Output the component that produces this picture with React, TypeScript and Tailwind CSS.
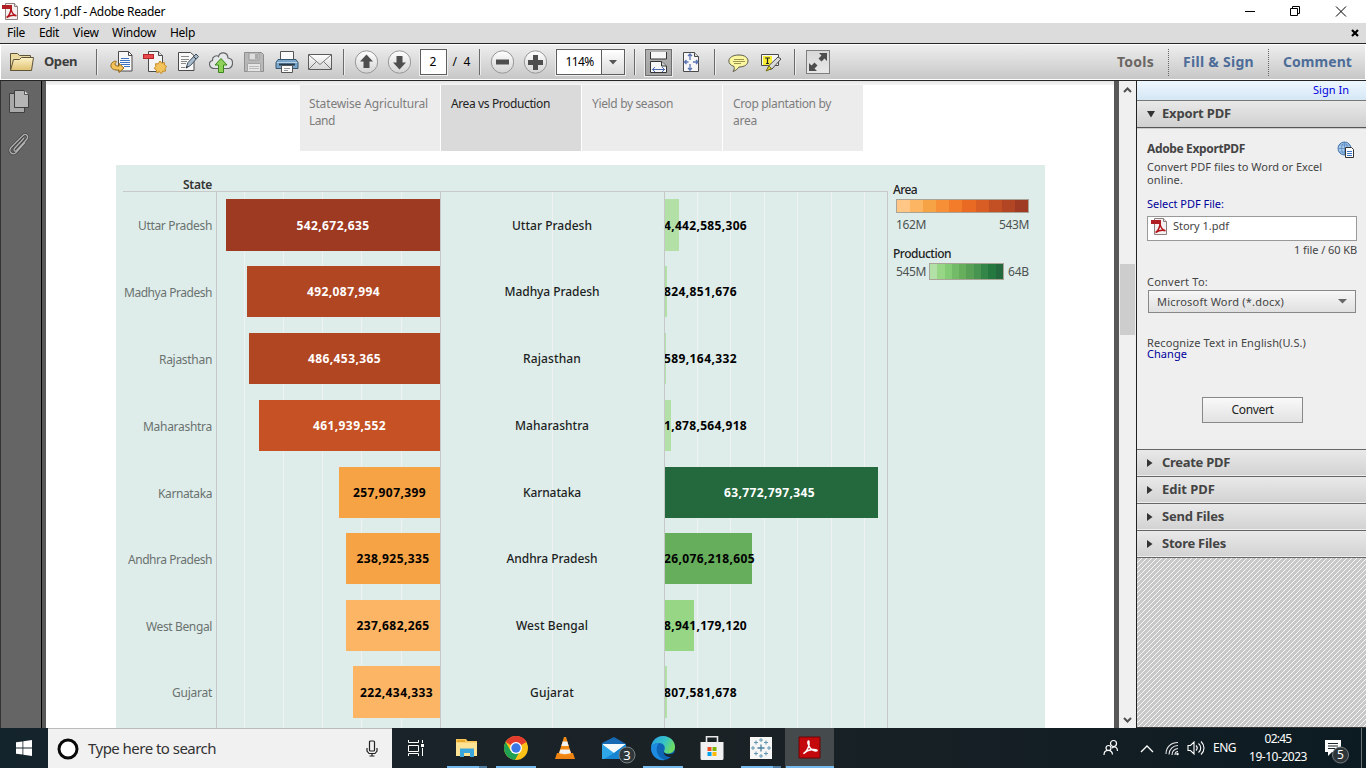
import React, { useLayoutEffect, useRef } from 'react';

/* Single line of text spread over an exact width through its letter spacing. */
function Fit({ w, children, className = '' }: { w: number; children: string; className?: string }) {
  const ref = useRef<HTMLSpanElement>(null);
  useLayoutEffect(() => {
    const el = ref.current;
    if (!el) return;
    el.style.letterSpacing = '0px';
    el.style.width = 'max-content';
    const natural = el.getBoundingClientRect().width;
    el.style.letterSpacing = `${(w - natural) / children.length}px`;
    el.style.width = `${w}px`;
  }, [w, children]);
  return (
    <span ref={ref} className={`inline-block shrink-0 whitespace-pre ${className}`}>
      {children}
    </span>
  );
}

const PdfIcon = () => (
  <svg width="17" height="17" viewBox="0 0 17 17" className="shrink-0">
    <path d="M3.500 .5h9l3 3v13h-12z" fill="#f4f1f0" stroke="#8d7f7d" />
    <path d="M12.500 .5v3h3" fill="#ddd" stroke="#8d7f7d" />
    <path d="M0 2h10v4H0z" fill="#b01f24" />
    <path d="M4.500 14.500c2-1 4.500-5 4.500-9 .5 4 2.500 6.500 5.500 7.200-3-.7-7 0-10 1.800z" fill="none" stroke="#b3151b" strokeWidth="1.500" />
  </svg>
);

const Sep = ({ className = '' }: { className?: string }) => (
  <div className={`h-[26px] w-px shrink-0 bg-[#6b6b6b] shadow-[1px_0_0_#ededed] ${className}`} />
);
const Slot = ({ children }: { children: React.ReactNode }) => (
  <div className="flex w-[33px] shrink-0 justify-center">
    <svg width="24" height="24" viewBox="0 0 24 24">{children}</svg>
  </div>
);

function TitleBar() {
  return (
    <div className="flex h-[23px] items-center bg-white pl-[2px]">
      <PdfIcon />
      <Fit w={142} className="ml-[4px] text-xs text-black">Story 1.pdf - Adobe Reader</Fit>
      <svg width="110" height="14" viewBox="0 0 110 14" className="mr-[14px] mb-[2px] ml-auto" fill="none" stroke="#000">
        <path d="M3 7.500h10M48.500 4.500h7v7h-7zM50.500 4.500v-2h7v7h-2" />
        <path d="M94 2.500l10 10M104 2.500l-10 10" />
      </svg>
    </div>
  );
}

function MenuBar() {
  return (
    <div className="flex h-5 items-center bg-[#dcdcdc] pl-[7px] text-xs text-black">
      <Fit w={18}>File</Fit>
      <Fit w={20} className="ml-[14px]">Edit</Fit>
      <Fit w={26} className="ml-[14px]">View</Fit>
      <Fit w={44} className="ml-[13px]">Window</Fit>
      <Fit w={25} className="ml-[14px]">Help</Fit>
      <svg width="8" height="8" viewBox="0 0 8 8" className="mr-[7px] ml-auto">
        <path d="M1 1l6 6M7 1L1 7" stroke="#000" strokeWidth="2.200" />
      </svg>
    </div>
  );
}

function Toolbar() {
  return (
    <div className="flex h-[38px] items-center border-y border-[#262626] bg-linear-to-b from-[#efefef] to-[#c6c6c6] shadow-[inset_1px_1px_0_#fff,inset_-1px_-1px_0_#fff]">
      <svg width="26" height="24" viewBox="0 0 26 24" className="ml-[9px] shrink-0">
        <defs>
          <linearGradient id="fold" x2="0" y2="1"><stop stopColor="#fdf3c9" /><stop offset="1" stopColor="#dfc170" /></linearGradient>
          <linearGradient id="ball" x2="0" y2="1"><stop stopColor="#fff" /><stop offset="1" stopColor="#d4d4d4" /></linearGradient>
        </defs>
        <path d="M1.500 20.500v-17h7l2 2h11v4" fill="#ead9a0" stroke="#5f543a" />
        <path d="M1.500 20.500l3-11h6l2-2h12l-2 13z" fill="url(#fold)" stroke="#5f543a" />
      </svg>
      <Fit w={33} className="ml-[9px] text-[13px] font-bold text-[#3d3d3d]">Open</Fit>
      <Sep className="mr-[8.500px] ml-[19px]" />
      <Slot>
        <path d="M8.500 1.500h10l3.500 3.500v16h-13.500z" fill="#f8f8f8" stroke="#4a4a4a" />
        <path d="M18.500 1.500v4H22" fill="none" stroke="#4a4a4a" />
        <path d="M11 8.500h8M10 10.500h10M10 12.500h10M11 14.500h9M14 16.500h6" stroke="#3b74c4" />
        <path d="M5.500 11c-3 .5-5 3-4.500 5.500.5 2.500 3.500 4 8 3.500v2.500l5-4.500-5-4.500v2.500c-2.500.3-4-.3-4-2 0-1 .8-1.600 1.500-2z" fill="#f4c45a" stroke="#8f6417" />
      </Slot>
      <Slot>
        <path d="M5.500 1.500h10l4 4v16h-14z" fill="#f4f4f4" stroke="#4a4a4a" />
        <path d="M15.500 1.500v4h4" fill="#ddd" stroke="#4a4a4a" />
        <rect x="0.500" y="4.500" width="10" height="4" fill="#e8474b" stroke="#b5262c" />
        <path d="M17 11l1.700 2.200 2.600-.8.300 2.700 2 1.400-1.500 2.100.500 2.500-2.700.1-1.600 2.300-2-1.700-2.600.8-.4-2.700-2.100-1.500 1.700-2.100-.4-2.600 2.700.2z" fill="#f3c35b" stroke="#c38a25" />
      </Slot>
      <Slot>
        <path d="M2.500 2.500h12l3.500 3v15H2.500z" fill="#f8f8f8" stroke="#4a4a4a" />
        <path d="M5 6.500h8M5 9.500h8M5 11.500h6M5 13.500h5M5 17.500h4" stroke="#8a8a8a" />
        <path d="M10 18l2-5.500 8-8.500 2.500 2.500-8 9z" fill="#a9bccd" stroke="#3f4d5c" />
        <path d="M10 18l2-1.500M17.500 6.500l2.500 2.500" stroke="#333" />
      </Slot>
      <Slot>
        <path d="M6 18.500c-6 0-7.500-6.500-2.500-8C3 6 8 5 9.500 6.500c1.500-5 9-5 9.500 1.500 6 .5 6 9 .5 10.500z" fill="#e5e7e8" stroke="#626567" strokeWidth="1.200" />
        <path d="M12 8.500l6 6.500h-3.500v7.500h-5V15H6z" fill="#8fd25a" stroke="#3c861d" />
      </Slot>
      <Slot>
        <path d="M2.500 2.500h17l2 2v17h-19z" fill="#b8b8b8" stroke="#8e8e8e" />
        <path d="M7 3h10v7H7z" fill="#dedede" stroke="#999" /><path d="M13 4h3v5h-3z" fill="#aaa" />
        <path d="M5.500 13.500h13v8h-13z" fill="#e6e6e6" stroke="#a3a3a3" /><path d="M7 16.500h10M7 18.500h10" stroke="#bbb" />
      </Slot>
      <Slot>
        <path d="M5.500 1.500h13v9h-13z" fill="#fafafa" stroke="#555" />
        <path d="M3 9.500h18l2 3v6H1v-6z" fill="#7ba6cb" stroke="#37566f" />
        <path d="M2 12.500h20" stroke="#b9d2e6" /><path d="M4 14.500h16" stroke="#243b4d" strokeWidth="2" />
        <path d="M6.500 15.500h11v7h-11z" fill="#fafafa" stroke="#555" /><path d="M9 18.500h6M9 20.500h4" stroke="#999" />
      </Slot>
      <Slot>
        <path d="M.5 4.500h23v15H.5z" fill="url(#ball)" stroke="#5c5c5c" />
        <path d="M1 5l11 9.500L23 5M1 19l7.500-7.500M23 19l-7.500-7.500" fill="none" stroke="#7a7a7a" />
      </Slot>
      <Sep className="mr-[6px] ml-[6px]" />
      <Slot>
        <circle cx="12.500" cy="12" r="11.200" fill="url(#ball)" stroke="#969696" />
        <path d="M12.500 4.500l6.500 7h-3.500V18h-6v-6.500H6z" fill="#4e4e4e" />
      </Slot>
      <Slot>
        <circle cx="12.500" cy="12" r="11.200" fill="url(#ball)" stroke="#969696" />
        <path d="M12.500 19.500l6.500-7h-3.500V6h-6v6.500H6z" fill="#4e4e4e" />
      </Slot>
      <div className="ml-[4px] flex h-[26px] w-[27px] shrink-0 items-center justify-center border border-[#5e5e5e] bg-white text-xs text-black shadow-[0_0_0_1px_#eee]">2</div>
      <Fit w={18} className="ml-[6px] text-xs text-black">/  4</Fit>
      <Sep className="mr-[6px] ml-[8px]" />
      <Slot>
        <circle cx="12.500" cy="12" r="11.200" fill="url(#ball)" stroke="#969696" />
        <path d="M6 9.500h13v5H6z" fill="#4e4e4e" />
      </Slot>
      <Slot>
        <circle cx="12.500" cy="12" r="11.200" fill="url(#ball)" stroke="#969696" />
        <path d="M10 5h5v5h5v5h-5v5h-5v-5H5v-5h5z" fill="#4e4e4e" />
      </Slot>
      <div className="ml-[4px] flex h-[26px] w-[69px] shrink-0 items-center border border-[#5e5e5e] bg-white shadow-[0_0_0_1px_#eee]">
        <Fit w={28} className="ml-[9px] text-xs text-black">114%</Fit>
        <div className="ml-auto flex h-full w-[23px] items-center justify-center border-l border-[#5e5e5e] bg-linear-to-b from-white to-[#dcdcdc]">
          <svg width="8" height="5" viewBox="0 0 8 5"><path d="M0 0h8L4 4.500z" fill="#555" /></svg>
        </div>
      </div>
      <Sep className="ml-[9px]" />
      <div className="ml-[10px] flex h-[27px] w-[27px] shrink-0 items-center justify-center border border-[#6e6e6e] bg-linear-to-b from-[#b2b2b2] to-[#a4a4a4] shadow-[0_0_0_1px_#eee]">
        <svg width="19" height="23" viewBox="0 0 19 23">
          <path d="M1.500 1v7h16V1" fill="#f6f6f6" stroke="#333" />
          <path d="M1.500 21.500V10.500h11l5 4.500v6.500z" fill="#f6f6f6" stroke="#333" /><path d="M12.500 10.500v4.500h5" fill="#ccc" stroke="#333" />
          <path d="M3 18.500h13M6 16l-2.500 2.500L6 21M13 16l2.500 2.500L13 21" fill="none" stroke="#4a66ad" />
        </svg>
      </div>
      <svg width="19" height="22" viewBox="0 0 19 22" className="ml-[10px] shrink-0">
        <path d="M1.500 1.500h11l4 4v15h-15z" fill="#f6f6f6" stroke="#4a4a4a" /><path d="M12.500 1.500v4h4" fill="#ddd" stroke="#4a4a4a" />
        <path d="M8 3v6M8 13v6M2.500 11h4M11 11h5M6 5l2-2 2 2M6 17l2 2 2-2M4.500 9l-2 2 2 2M14 9l2 2-2 2" fill="none" stroke="#5a74b5" strokeWidth="1.300" />
      </svg>
      <Sep className="ml-[13px]" />
      <svg width="22" height="20" viewBox="0 0 22 20" className="mt-[2px] ml-[13px] shrink-0">
        <path d="M11 2c12 0 12 12 0 12-1 1.500-3 3.500-6 4.500 1.500-2 1.500-3.500 1-5C-2 11-1 2 11 2z" fill="#fbf6a0" stroke="#5c5c4b" />
        <path d="M6 6.500h10M5 8.500h12M6 10.500h7" stroke="#9d9650" />
      </svg>
      <svg width="24" height="22" viewBox="0 0 24 22" className="ml-[9px] shrink-0">
        <path d="M2.500 3.500h17v11h-17z" fill="#f5f5f5" stroke="#4a4a4a" />
        <path d="M4 5h9v9H4z" fill="#f8ef35" /><path d="M6 7h5M8.500 7v5.500M7 12.500h3" stroke="#222" strokeWidth="1.200" />
        <path d="M8 19l2-4.500L19 6l3 2-9 10z" fill="#d8d8d8" stroke="#4a4a4a" /><path d="M7 20l3-5 2.500 2.500z" fill="#e6d820" stroke="#77701a" />
      </svg>
      <Sep className="ml-[11px]" />
      <div className="ml-[11px] flex size-[24px] shrink-0 items-center justify-center border border-[#7e7e7e] bg-linear-to-b from-[#d8d8d8] to-[#e8e8e8]">
        <svg width="20" height="20" viewBox="0 0 20 20" fill="#4e4e4e">
          <path d="M19 1v8l-2.500-2.500-3 3-3-3 3-3L11 1zM1 19v-8l2.500 2.500 3-3 3 3-3 3L9 19z" />
        </svg>
      </div>
      <div className="ml-auto flex items-center text-sm font-bold text-[#4d6d98]">
        <Fit w={37} className="text-[#6b6763]">Tools</Fit>
        <div className="ml-[14px] h-[27px] border-l border-dotted border-[#666]" />
        <Fit w={71} className="ml-[14px]">Fill & Sign</Fit>
        <div className="ml-[14px] h-[27px] border-l border-dotted border-[#666]" />
        <Fit w={69} className="mr-[14px] ml-[14px]">Comment</Fit>
      </div>
    </div>
  );
}

function SideRail() {
  return (
    <div className="flex w-[46px] shrink-0 border-l border-[#333] bg-[#585858]">
      <div className="flex w-10 flex-col items-center bg-[#656565] pt-[8px]">
        <svg width="24" height="24" viewBox="0 0 24 24" className="mr-[4px]">
          <path d="M2.500 4.500h15v19h-15z" fill="#a9a9a9" stroke="#3f3f3f" />
          <path d="M7.500 1.500h10l4 4v13h-14z" fill="#b5b5b5" stroke="#3f3f3f" /><path d="M17.500 1.500v4h4" fill="#ddd" stroke="#555" />
        </svg>
        <svg width="24" height="26" viewBox="0 0 24 26" className="mt-[18px] mr-[4px]">
          <path d="M17 7L7.500 17.500c-1.500 2 .5 3.500 2 2L20 8c2-3.500-1.500-6-4-3.500L4 16.500c-3 4 1 8.500 5 5L18 11.500" fill="none" stroke="#3f3f3f" strokeWidth="2.600" />
          <path d="M17 7L7.500 17.500c-1.500 2 .5 3.500 2 2L20 8c2-3.500-1.500-6-4-3.500L4 16.500c-3 4 1 8.500 5 5L18 11.500" fill="none" stroke="#b0b0b0" strokeWidth="1.300" />
        </svg>
      </div>
      <div className="w-px bg-black" />
    </div>
  );
}

const rows = [
  { n: 'Uttar Pradesh', lw: 74, mw: 80, area: '542,672,635', aw: 214, ac: 'bg-[#9e3a22] text-white', prod: '4,442,585,306', pl: 83, pw: 14, pc: 'bg-[#b3e0a6]', row: 'h-[67px]', bar: 'h-[52px]' },
  { n: 'Madhya Pradesh', lw: 88, mw: 95, area: '492,087,994', aw: 193, ac: 'bg-[#b14623] text-white', prod: '824,851,676', pl: 73, pw: 2, pc: 'bg-[#b3e0a6]', row: 'h-[67px]', bar: 'h-[51px]' },
  { n: 'Rajasthan', lw: 53, mw: 58, area: '486,453,365', aw: 191, ac: 'bg-[#b14623] text-white', prod: '589,164,332', pl: 73, pw: 1, pc: 'bg-[#b3e0a6]', row: 'h-[67px]', bar: 'h-[51px]' },
  { n: 'Maharashtra', lw: 69, mw: 74, area: '461,939,552', aw: 181, ac: 'bg-[#c55124] text-white', prod: '1,878,564,918', pl: 83, pw: 6, pc: 'bg-[#b3e0a6]', row: 'h-[67px]', bar: 'h-[51px]' },
  { n: 'Karnataka', lw: 54, mw: 58, area: '257,907,399', aw: 101, ac: 'bg-[#f5a344] text-black', prod: '63,772,797,345', pl: 91, pw: 213, pc: 'bg-[#24693d] text-white', row: 'h-[66px]', bar: 'h-[51px]' },
  { n: 'Andhra Pradesh', lw: 84, mw: 91, area: '238,925,335', aw: 94, ac: 'bg-[#f5a344] text-black', prod: '26,076,218,605', pl: 91, pw: 87, pc: 'bg-[#66ad5c]', row: 'h-[67px]', bar: 'h-[51px]' },
  { n: 'West Bengal', lw: 66, mw: 72, area: '237,682,265', aw: 94, ac: 'bg-[#fbb565] text-black', prod: '8,941,179,120', pl: 83, pw: 29, pc: 'bg-[#96d684]', row: 'h-[66px]', bar: 'h-[51px]' },
  { n: 'Gujarat', lw: 40, mw: 44, area: '222,434,333', aw: 87, ac: 'bg-[#fbb565] text-black', prod: '807,581,678', pl: 73, pw: 2, pc: 'bg-[#b3e0a6]', row: 'h-[67px]', bar: 'h-[52px]' },
];
const gridX = [121, 160, 199, 238, 278, 429, 574, 607, 641, 674, 708, 741];
const axisX = [93, 317, 541, 764];
const orange = ['#ffc685', '#fcb562', '#f5a344', '#f68f36', '#f27c29', '#e96a22', '#d75d25', '#c25024', '#b14524', '#9e3b22'];
const green = ['#b3e0a6', '#96d684', '#84cb76', '#74bb69', '#66ad5c', '#57a055', '#479450', '#338647', '#25783f', '#24693d'];

function Chart() {
  return (
    <div className="ml-[70px] flex h-[563px] w-[929px] overflow-hidden bg-[#dfedea] pl-[7px] text-[12px]">
      <div className="w-[765px] shrink-0">
        <div className="flex h-[27px] border-b border-[#c8cac9] pt-[10px]">
          <Fit w={29} className="ml-[60px] leading-5 font-semibold text-[#333]">State</Fit>
        </div>
        <div className="relative">
          <svg width="765" height="537" className="absolute top-0 left-0" shapeRendering="crispEdges">
            {gridX.map((x) => <rect key={x} x={x} width="1" height="537" fill="#eff2f1" />)}
          </svg>
          {rows.map((r) => (
            <div key={r.n} className={`relative grid grid-cols-[93px_224px_224px_224px] pt-[7px] ${r.row}`}>
              <div className={`flex items-center justify-end pr-[4px] text-[#6a7270] ${r.bar}`}>
                <Fit w={r.lw} className="pt-[2px]">{r.n}</Fit>
              </div>
              <div className={`flex justify-end ${r.bar}`}>
                <div className={`flex h-full items-center justify-center font-bold ${r.ac}`} style={{ width: r.aw }}>
                  <Fit w={73} className="pt-px">{r.area}</Fit>
                </div>
              </div>
              <div className={`flex items-center justify-center font-medium text-[#1c1f1e] ${r.bar}`}>
                <Fit w={r.mw} className="pt-px">{r.n}</Fit>
              </div>
              <div className={`flex pl-px ${r.bar}`}>
                <div className={`flex h-full items-center font-bold ${r.pc}`} style={{ width: r.pw }}>
                  <Fit w={r.pl} className={r.pw > 200 ? 'ml-[59px] pt-px' : '-ml-px pt-px text-black'}>{r.prod}</Fit>
                </div>
              </div>
            </div>
          ))}
          <svg width="765" height="537" className="absolute top-0 left-0" shapeRendering="crispEdges">
            {axisX.map((x) => <rect key={x} x={x} width="1" height="537" fill="#c6c8c7" />)}
          </svg>
        </div>
      </div>
      <div className="ml-[5px] pt-[16px] text-[#4c5351]">
        <Fit w={24} className="block leading-[18px] font-medium text-[#222]">Area</Fit>
        <div className="ml-[3px] flex h-[14px] w-[133px] border border-[#a9a497]">
          {orange.map((c) => <div key={c} className="flex-1" style={{ background: c }} />)}
        </div>
        <div className="mt-[3px] ml-[3px] flex w-[133px] justify-between leading-[18px]">
          <Fit w={30}>162M</Fit>
          <Fit w={30}>543M</Fit>
        </div>
        <Fit w={58} className="mt-[11px] block leading-[18px] font-medium text-[#222]">Production</Fit>
        <div className="ml-[3px] flex w-[133px] items-center justify-between leading-[18px]">
          <Fit w={30}>545M</Fit>
          <div className="-mt-px -ml-px flex h-[17px] w-[75px] border border-[#a9a497]">
            {green.map((c) => <div key={c} className="flex-1" style={{ background: c }} />)}
          </div>
          <Fit w={21}>64B</Fit>
        </div>
      </div>
    </div>
  );
}

function Page() {
  return (
    <div className="flex w-[1068px] shrink-0 flex-col overflow-hidden bg-white">
      <div className="h-[4px] shrink-0 bg-linear-to-b from-[#e4e4e4] to-[#f6f6f6]" />
      <div className="mb-[14px] ml-[254px] flex h-[66px] shrink-0 gap-px text-xs leading-[17px] text-[#7d7d7d]">
        <div className="flex w-[140px] flex-col bg-[#ececec] pt-[10px] pl-[9px]">
          <Fit w={119}>Statewise Agricultural</Fit>
          <Fit w={26}>Land</Fit>
        </div>
        <div className="flex w-[140px] flex-col bg-[#dadada] pt-[10px] pl-[10px]"><Fit w={99} className="text-[#222]">Area vs Production</Fit></div>
        <div className="flex w-[140px] flex-col bg-[#ececec] pt-[10px] pl-[10px]"><Fit w={81}>Yield by season</Fit></div>
        <div className="flex w-[140px] flex-col bg-[#ececec] pt-[10px] pl-[10px]">
          <Fit w={98}>Crop plantation by</Fit>
          <Fit w={24}>area</Fit>
        </div>
      </div>
      <Chart />
    </div>
  );
}

function Accordion({ title, w }: { title: string; w: number }) {
  return (
    <div className="flex h-[27px] items-center border-b border-[#666] bg-linear-to-b from-[#e9e9e9] to-[#d2d2d2] pl-[10px] shadow-[inset_0_-1px_0_#eee]">
      <svg width="6" height="8" viewBox="0 0 6 8"><path d="M0 0l5.500 4L0 8z" fill="#333" /></svg>
      <Fit w={w} className="ml-[9px] text-[13px] font-bold text-[#444]">{title}</Fit>
    </div>
  );
}

function ToolsPanel() {
  return (
    <div className="flex min-w-0 flex-1 flex-col border-l border-[#222] bg-[#efefef] text-[11px] text-[#444]">
      <div className="flex h-5 shrink-0 items-center justify-end border-b border-[#777] bg-linear-to-b from-[#eef7ff] to-[#d5e7f5] pr-[17px]">
        <Fit w={36} className="text-[#0000e0]">Sign In</Fit>
      </div>
      <div className="flex h-[27px] shrink-0 items-center border-b border-[#555] bg-linear-to-b from-[#e9e9e9] to-[#d0d0d0] pl-[10px] shadow-[0_1px_0_#ccc]">
        <svg width="8" height="7" viewBox="0 0 8 7"><path d="M0 0h8L4 6.500z" fill="#333" /></svg>
        <Fit w={69} className="ml-[7px] text-[13px] font-bold text-[#444]">Export PDF</Fit>
      </div>
      <div className="flex h-[322px] shrink-0 flex-col border-b border-[#666] px-[9px] pl-[10px]">
        <div className="mt-[12px] flex h-[18px] items-center justify-between">
          <Fit w={98} className="text-xs font-bold">Adobe ExportPDF</Fit>
          <svg width="18" height="18" viewBox="0 0 18 18" className="mt-[2px] mr-[2px]">
            <circle cx="7.500" cy="7.500" r="6.500" fill="#a9cbeb" stroke="#4877ac" />
            <path d="M1 7.500h13M7.500 1v13M2 4h11M2 11h11M7.500 1c-4 4-4 9 0 13M7.500 1c4 4 4 9 0 13" fill="none" stroke="#4f83bb" strokeWidth=".7" />
            <path d="M8.500 6.500h6l2 2v8h-8z" fill="#fff" stroke="#333" /><path d="M10 10.500h5M10 12.500h5M10 14.500h5" stroke="#3b74c4" />
          </svg>
        </div>
        <Fit w={175} className="mt-[2px] leading-[13px]">Convert PDF files to Word or Excel</Fit>
        <Fit w={36} className="leading-[13px]">online.</Fit>
        <Fit w={77} className="mt-[11px] leading-[13px] text-[#00009c]">Select PDF File:</Fit>
        <div className="mt-[6px] flex h-[25px] w-[210px] border border-[#999] bg-white pt-px pl-[3px]">
          <PdfIcon />
          <Fit w={56} className="ml-[5px] leading-[15px]">Story 1.pdf</Fit>
        </div>
        <Fit w={63} className="mt-[2px] self-end leading-[13px]">1 file / 60 KB</Fit>
        <Fit w={61} className="mt-[19px] leading-[14px]">Convert To:</Fit>
        <div className="mt-px ml-px flex h-[23px] w-[208px] items-center justify-between border border-[#888] bg-linear-to-b from-[#f7f7f7] to-[#e0e0e0] pr-[8px] pl-[8px]">
          <Fit w={127} className="pt-px">Microsoft Word (*.docx)</Fit>
          <svg width="9" height="5" viewBox="0 0 9 5"><path d="M0 0h9L4.500 4.500z" fill="#666" /></svg>
        </div>
        <Fit w={159} className="mt-[24px] leading-[12px]">Recognize Text in English(U.S.)</Fit>
        <Fit w={40} className="leading-[10px] text-[#00009c]">Change</Fit>
        <div className="mt-[38px] ml-[55px] flex h-[26px] w-[101px] items-center justify-center border border-[#888] bg-linear-to-b from-[#f9f9f9] to-[#e2e2e2] text-[#222]">
          <Fit w={42} className="text-xs">Convert</Fit>
        </div>
      </div>
      <Accordion title="Create PDF" w={68} />
      <Accordion title="Edit PDF" w={53} />
      <Accordion title="Send Files" w={62} />
      <Accordion title="Store Files" w={64} />
      <svg className="h-0 w-full flex-1 border-b border-[#333]" shapeRendering="crispEdges">
        <defs>
          <pattern id="hatch" width="5" height="5" patternUnits="userSpaceOnUse">
            <path d="M0 0h5v5H0z" fill="#c8c8c8" />
            <path d="M4 0h1v1H4zM3 1h1v1H3zM2 2h1v1H2zM1 3h1v1H1zM0 4h1v1H0z" fill="#f8f8f8" />
          </pattern>
        </defs>
        <rect width="100%" height="100%" fill="url(#hatch)" />
      </svg>
    </div>
  );
}

function ScrollBar() {
  return (
    <div className="flex w-[22px] shrink-0 flex-col border-l-[5px] border-[#575757] bg-[#f0f0f0]">
      <svg width="17" height="17" viewBox="0 0 17 17" className="shrink-0"><path d="M5 11l3.500-3.500L12 11" fill="none" stroke="#505050" strokeWidth="2" /></svg>
      <div className="mt-[166px] ml-px h-[71px] w-[15px] shrink-0 bg-[#cdcdcd]" />
      <svg width="17" height="17" viewBox="0 0 17 17" className="mt-auto shrink-0"><path d="M5 7l3.500 3.500L12 7" fill="none" stroke="#505050" strokeWidth="2" /></svg>
    </div>
  );
}

const AppButton = ({ children, line = '', on = '' }: { children: React.ReactNode; line?: string; on?: string }) => (
  <div className={`flex h-full w-[49px] shrink-0 flex-col items-center ${on}`}>
    <svg width="36" height="30" viewBox="0 0 36 30" className="mt-[5px] shrink-0 overflow-visible">{children}</svg>
    <div className={`mt-auto h-[2px] ${line}`} />
  </div>
);

function Taskbar() {
  return (
    <div className="flex h-10 shrink-0 bg-linear-to-r from-[#14242c] via-[#1b2226] to-[#0c1b22] text-white">
      <div className="flex w-12 shrink-0 items-center justify-center">
        <svg width="16" height="16" viewBox="0 0 16 16" fill="#fff"><path d="M0 2.300l6.500-.9v6.100H0zM7.300 1.300L16 0v7.500H7.300zM0 8.400h6.500v6.200L0 13.700zM7.300 8.400H16V16l-8.700-1.300z" /></svg>
      </div>
      <div className="flex w-[344px] shrink-0 items-center border-t border-[#bbb] bg-[#f1f1f1] pl-[9px]">
        <svg width="22" height="22" viewBox="0 0 22 22"><circle cx="11" cy="11" r="9" fill="#fff" stroke="#0a0a0a" strokeWidth="3" /></svg>
        <Fit w={128} className="ml-[9px] text-[15px] text-[#333]">Type here to search</Fit>
        <svg width="12" height="17" viewBox="0 0 12 17" className="mr-[14px] ml-auto" fill="none" stroke="#222" strokeWidth="1.200">
          <rect x="3.500" y="1" width="5" height="10" rx="1" /><path d="M1 8v3l2 2.500h6l2-2.500V8M6 13.500V16M3.500 16h5" />
        </svg>
      </div>
      <div className="flex w-[50px] shrink-0 items-center justify-center">
        <svg width="18" height="16" viewBox="0 0 18 16" className="mr-[2px]" fill="none" stroke="#fff">
          <path d="M1.500 0v2.500h10V0M1.500 5.500h10v6h-10zM1.500 16v-2.500h10V16M15.500 0v3M15.500 8v8" /><path d="M14 4h3v3h-3z" fill="#fff" stroke="none" />
        </svg>
      </div>
      <AppButton line="w-10 bg-linear-to-r from-[#76b9ed] from-80% to-[#4f7da1] to-80%">
        <path d="M7 6h10l1.500 2H28v15H7z" fill="#f5c657" /><path d="M8 7h8v2H8z" fill="#e8a92c" /><path d="M7 9.500h21V23H7z" fill="#fee394" />
        <path d="M11 24v-8.500h14V24h-4v-4h-6v4z" fill="#3ba6dc" />
      </AppButton>
      <AppButton line="w-10 bg-[#76b9ed]">
        <circle cx="18" cy="15" r="12" fill="#fbc116" />
        <path d="M18 15L7.600 9A12 12 0 0 1 28.400 9z" fill="#e33b2e" />
        <path d="M18 3a12 12 0 0 1 10.400 6H18z" fill="#e33b2e" />
        <path d="M7.600 9A12 12 0 0 0 17 27l5.200-9.500L18 15l-5.200 3z" fill="#1fa052" />
        <circle cx="18" cy="15" r="6" fill="#fff" /><circle cx="18" cy="15" r="4.700" fill="#3b78e7" />
      </AppButton>
      <AppButton>
        <path d="M10 20h16l2 6H8z" fill="#ee8311" /><path d="M17 4h2l5.500 17.500c-3 2-10 2-13 0z" fill="#f48b14" />
        <path d="M15.700 8.500h4.600l1.400 4.500h-7.400zM13.300 16.500h9.400l1.200 3.500c-3 1.500-9 1.500-11.800 0z" fill="#f2f2f2" />
      </AppButton>
      <AppButton>
        <path d="M6 10L18 4l12 7v15H6z" fill="#1769b4" /><path d="M7 11h22v6l-11 5-11-5z" fill="#f5f9fc" />
        <path d="M6 11l12 9 12-9v15H6z" fill="#2fa6e8" /><path d="M18 20l12-9v15H8z" fill="#1686d4" />
        <circle cx="31" cy="22" r="8" fill="#30373a" stroke="#7c8284" /><text x="31" y="26.500" textAnchor="middle" fontSize="13" fill="#fff">3</text>
      </AppButton>
      <AppButton line="w-10 bg-[#76b9ed]">
        <defs><linearGradient id="edge" x2="1" y2=".4"><stop stopColor="#2a9ce0" /><stop offset=".6" stopColor="#36c4c6" /><stop offset="1" stopColor="#6bdb64" /></linearGradient></defs>
        <circle cx="18" cy="15" r="12" fill="#0f65b5" />
        <path d="M6 14.500C7 8 11 3 18 3c7 0 12 5 12 11 0 4-3 6.500-7 6.500-3 0-4.500-1-4-2.500 2-3 .5-8-5-8-4 0-7 2-8 4.500z" fill="url(#edge)" />
        <path d="M6 15c1-3 4-5.500 8-5-4 4-3.500 14 6 17C12 28.500 6 22 6 15z" fill="#1c8be0" />
        <path d="M19 18c-.5 2 1.500 3.500 5 3.200 2 0 4-.7 5-1.400l1.500 1.500-2 2c-5 2-11-.8-9.500-5.300z" fill="#17242b" />
      </AppButton>
      <AppButton>
        <path d="M12.500 10V3.700h11V10" fill="none" stroke="#e8e8e8" strokeWidth="1.600" /><path d="M6.500 9h23v16.500a1.500 1.500 0 0 1-1.500 1.500H8a1.500 1.500 0 0 1-1.500-1.500z" fill="#f1f1f1" />
        <path d="M13.500 14h4v4h-4z" fill="#f04e23" /><path d="M18.500 14h4v4h-4z" fill="#7db700" /><path d="M13.500 19h4v4h-4z" fill="#00a2ea" /><path d="M18.500 19h4v4h-4z" fill="#fdb801" />
      </AppButton>
      <AppButton line="w-10 bg-linear-to-r from-[#76b9ed] from-80% to-[#4f7da1] to-80%">
        <path d="M7 4h22v22H7z" fill="#f6f6f6" />
        <path d="M18 11.500v7M14.500 15h7" stroke="#4b7f9c" strokeWidth="1.300" />
        <path d="M18 5v4M16 7h4M18 21v4M16 23h4M8 15h4M10 13v4M24 15h4M26 13v4M13 7.500v4M11 9.500h4M23 7.500v4M21 9.500h4M13 18.500v4M11 20.500h4M23 18.500v4M21 20.500h4" stroke="#6395b0" />
      </AppButton>
      <AppButton line="w-[48px] bg-[#76b9ed]" on="bg-[#454a4d]">
        <path d="M7 4h21v21H7z" fill="#c4090c" stroke="#6b0608" />
        <path d="M11.500 20.500c3-1 6.500-8 5.500-12-.5-1.500-1.500 0-1 2 1 4 4 7.500 7.500 7.500s1-2-3-1.500c-4 .5-7 2-9 4z" fill="none" stroke="#fff" strokeWidth="1.400" />
      </AppButton>
      <div className="ml-auto flex shrink-0 items-center">
        <svg width="16" height="18" viewBox="0 0 16 18" fill="none" stroke="#fff" strokeWidth="1.200">
          <circle cx="10.500" cy="4.500" r="3" /><circle cx="5.500" cy="9" r="2.500" /><path d="M1 16c0-6 8-6 8.500-.5M9 9c3-2.500 5.500-.5 5.500 3" />
        </svg>
        <svg width="14" height="9" viewBox="0 0 14 9" className="ml-[21px]" fill="none" stroke="#fff" strokeWidth="1.300"><path d="M1 8l6-6 6 6" /></svg>
        <svg width="15" height="15" viewBox="0 0 15 15" className="ml-[11px]" fill="none" stroke="#e8e8e8" strokeWidth="1.100">
          <path d="M1 13C1 6 6 1.500 13 1.500M4 13.500c0-5 4-9 9-9M7 14c0-3.500 2.500-6 6-6.500M10 14c0-2 1-3.500 3-3.500" /><circle cx="12.500" cy="13" r="1.200" fill="#fff" stroke="none" />
        </svg>
        <svg width="18" height="16" viewBox="0 0 18 16" className="ml-[7px]" fill="none" stroke="#fff" strokeWidth="1.100">
          <path d="M1 5.500h2.500L7 2v12l-3.500-3.500H1zM9 5.500c1.500 1.500 1.500 3.500 0 5M11.500 3.500c3 2.500 3 6.500 0 9M14 1.500c4 4 4 9 0 13" />
        </svg>
        <Fit w={23} className="ml-[8px] text-xs">ENG</Fit>
        <div className="ml-[13px] flex w-[58px] flex-col items-center text-xs leading-[18px]">
          <Fit w={27}>02:45</Fit>
          <Fit w={58}>19-10-2023</Fit>
        </div>
        <svg width="26" height="26" viewBox="0 0 26 26" className="mt-[5px] ml-[17px]">
          <path d="M1 2h16v12H8l-4 4v-4H1z" fill="#fff" /><path d="M4 5.500h10M4 8h10M4 10.500h7" stroke="#1a262b" />
          <circle cx="16.500" cy="17" r="8" fill="#2e3538" stroke="#767c7f" /><text x="16.500" y="21" textAnchor="middle" fontSize="12" fill="#fff">5</text>
        </svg>
        <div className="mr-[4px] ml-[11px] h-10 w-px bg-[#6b7276]" />
      </div>
    </div>
  );
}

export default function App() {
  return (
    <div className="flex h-[768px] w-[1366px] flex-col overflow-hidden bg-white font-['Noto_Sans','Open_Sans',sans-serif]">
      <TitleBar />
      <MenuBar />
      <Toolbar />
      <div className="flex h-[647px] shrink-0">
        <SideRail />
        <Page />
        <ScrollBar />
        <ToolsPanel />
      </div>
      <Taskbar />
    </div>
  );
}
